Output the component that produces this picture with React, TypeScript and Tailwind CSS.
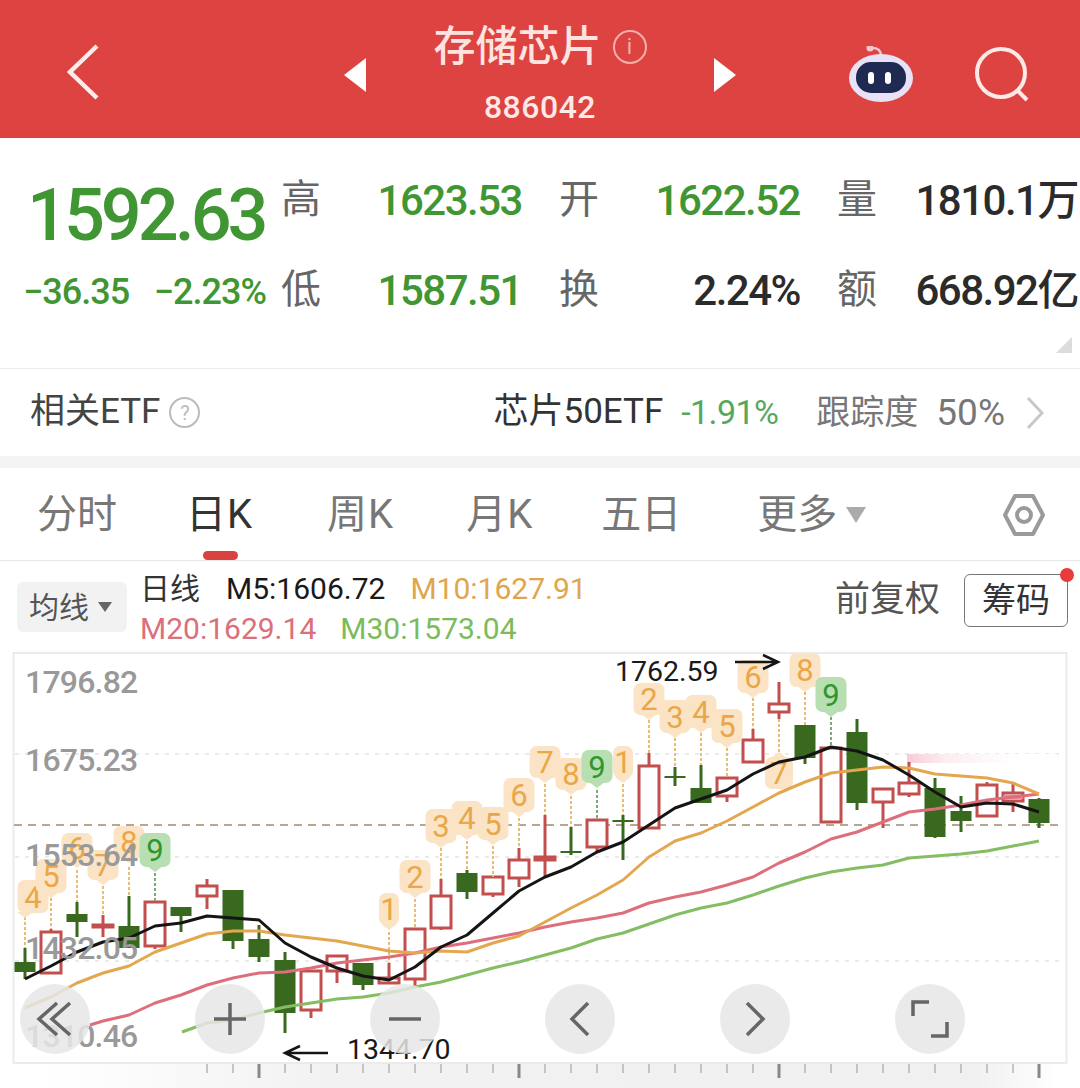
// [cx, wickTop, bodyTop, bodyBottom, wickBottom, up]
const candles: [number, number, number, number, number, boolean][] = [
  [25, 948, 962, 972, 979, false],
  [51, 929, 932, 973, 973, true],
  [77, 902, 914, 922, 937, false],
  [103, 915, 925, 927, 937, true],
  [129, 896, 926, 948, 948, false],
  [155, 902, 902, 946, 949, true],
  [181, 907, 907, 916, 932, false],
  [207, 879, 886, 896, 909, true],
  [233, 890, 890, 941, 949, false],
  [259, 925, 939, 957, 962, false],
  [285, 952, 960, 1013, 1033, false],
  [311, 971, 971, 1010, 1018, true],
  [337, 956, 956, 971, 983, true],
  [363, 963, 963, 985, 990, false],
  [389, 963, 978, 983, 983, true],
  [415, 929, 929, 979, 987, true],
  [441, 879, 896, 928, 930, true],
  [467, 870, 873, 892, 899, false],
  [493, 877, 877, 894, 897, true],
  [519, 848, 860, 878, 887, true],
  [545, 815, 857, 860, 877, true],
  [571, 827, 851, 853, 855, false],
  [597, 820, 820, 847, 852, true],
  [623, 815, 820, 822, 860, false],
  [649, 753, 766, 828, 828, true],
  [675, 767, 776, 778, 786, false],
  [701, 765, 788, 803, 803, false],
  [727, 778, 778, 796, 802, true],
  [753, 729, 740, 762, 762, true],
  [779, 682, 704, 712, 719, true],
  [805, 725, 725, 758, 764, false],
  [831, 748, 748, 822, 822, true],
  [857, 719, 732, 803, 810, false],
  [883, 789, 789, 802, 828, true],
  [909, 762, 783, 794, 797, true],
  [935, 778, 788, 837, 838, false],
  [961, 796, 811, 821, 832, false],
  [987, 782, 785, 816, 816, true],
  [1013, 782, 793, 801, 812, true],
  [1039, 798, 799, 823, 828, false],
];

const m5 = '25,979 51,966 77,952 103,942 129,938 155,926 181,923 207,916 233,918 259,920 285,943 311,957 337,968 363,976 389,980 415,967 441,947 467,935 493,913 519,891 545,877 571,867 597,852 623,842 649,825 675,808 701,799 727,790 753,774 779,762 805,757 831,747 857,751 883,760 909,775 935,792 961,807 987,803 1013,804 1039,812';
const m10 = '25,1008 51,997 77,983 103,973 129,966 155,952 181,943 207,934 233,931 259,931 285,935 311,938 337,941 363,946 389,951 415,953 441,951 467,952 493,943 519,936 545,922 571,908 597,895 623,880 649,857 675,841 701,833 727,821 753,807 779,793 805,782 831,773 857,770 883,767 909,768 935,774 961,776 987,778 1013,783 1039,794';
const m20 = '90,1025 103,1021 129,1015 155,1003 181,995 207,985 233,978 259,973 285,972 311,968 337,963 363,960 389,957 415,953 441,947 467,943 493,938 519,933 545,927 571,922 597,918 623,913 649,903 675,897 701,892 727,885 753,877 779,863 805,852 831,839 857,832 883,822 909,812 935,809 961,805 987,800 1013,797 1039,794';
const m30 = '182,1032 207,1023 233,1020 259,1013 285,1007 311,1003 337,999 363,997 389,993 415,987 441,982 467,975 493,968 519,962 545,955 571,948 597,939 623,933 649,924 675,915 701,908 727,903 753,895 779,886 805,878 831,872 857,868 883,865 909,858 935,856 961,854 987,851 1013,846 1039,841';

// [tipX, tagX, top, bottom, lineFrom, lineTo, label]
const tags: [number, number, number, number, number, number, string][] = [
  [25, 33, 880, 913, 917, 948, '4'],
  [51, 51, 859, 893, 898, 929, '5'],
  [77, 77, 833, 863, 870, 902, '6'],
  [103, 103, 850, 880, 886, 915, '7'],
  [129, 129, 826, 858, 867, 896, '8'],
  [155, 155, 833, 867, 873, 902, '9'],
  [389, 389, 893, 925, 932, 963, '1'],
  [415, 415, 860, 893, 899, 929, '2'],
  [441, 441, 809, 843, 848, 879, '3'],
  [467, 467, 801, 835, 841, 870, '4'],
  [493, 493, 807, 840, 846, 877, '5'],
  [519, 519, 778, 812, 818, 848, '6'],
  [545, 545, 746, 778, 784, 815, '7'],
  [571, 571, 758, 790, 796, 827, '8'],
  [597, 597, 750, 783, 790, 820, '9'],
  [623, 623, 746, 778, 784, 815, '1'],
  [649, 649, 683, 715, 720, 753, '2'],
  [675, 675, 700, 733, 738, 767, '3'],
  [701, 701, 695, 728, 733, 765, '4'],
  [727, 727, 709, 743, 748, 778, '5'],
  [753, 753, 660, 693, 698, 729, '6'],
  [805, 805, 653, 687, 692, 725, '8'],
  [831, 831, 677, 712, 717, 748, '9'],
];

const axisLabels: [number, string][] = [
  [693, '1796.82'],
  [771, '1675.23'],
  [866, '1553.64'],
  [959, '1432.05'],
  [1047, '1310.46'],
];

const ticks = Array.from({ length: 33 }, (_, i) => 207 + i * 26);

function Candle({ c }: { c: (typeof candles)[number] }) {
  const [cx, wickTop, bodyTop, bodyBottom, wickBottom, up] = c;
  const color = up ? '#c24f4d' : '#38691f';
  return (
    <g>
      <line x1={cx} x2={cx} y1={wickTop} y2={wickBottom} stroke={color} strokeWidth={3} />
      {up ? (
        <rect x={cx - 10} y={bodyTop} width={20} height={bodyBottom - bodyTop} fill="#fff" stroke={color} strokeWidth={3} />
      ) : (
        <rect x={cx - 10.5} y={bodyTop} width={21} height={bodyBottom - bodyTop} fill={color} />
      )}
    </g>
  );
}

function Tag({ t }: { t: (typeof tags)[number] }) {
  const [tipX, tagX, top, bottom, from, to, label] = t;
  const green = label === '9';
  const narrow = label === '1';
  const w = narrow ? 20 : 31;
  const bg = green ? '#b7dfb1' : '#fbe3c6';
  return (
    <g>
      <line x1={tipX} x2={tipX} y1={from} y2={to} stroke={green ? '#7fa67c' : '#e8bb76'} strokeWidth={2} strokeDasharray="3 2" />
      <rect x={tagX - w / 2} y={top} width={w} height={bottom - top} rx={7} fill={bg} />
      <path d={`M${tipX - 8} ${bottom - 1}L${tipX} ${bottom + 5}L${tipX + 8} ${bottom - 1}Z`} fill={bg} />
      <text x={tagX} y={(top + bottom) / 2 + 11} textAnchor="middle" className={`text-[31px] ${green ? 'fill-[#2f962f]' : 'fill-[#e9a748]'}`}>
        {label}
      </text>
    </g>
  );
}

function KChart() {
  return (
    <svg viewBox="0 650 1080 438" className="block w-[1080px] h-[438px]">
      <defs>
        <linearGradient id="strip" x1="0" x2="1" y1="0" y2="0">
          <stop offset="0.04" stopColor="#fff" />
          <stop offset="0.3" stopColor="#f2f2f2" />
          <stop offset="0.9" stopColor="#f0f0f0" />
          <stop offset="0.98" stopColor="#fff" />
        </linearGradient>
        <linearGradient id="fade" x1="0" x2="1" y1="0" y2="0">
          <stop offset="0" stopColor="#f6cdd6" />
          <stop offset="0.25" stopColor="#fcedf0" />
          <stop offset="0.7" stopColor="#fff" />
        </linearGradient>
      </defs>
      <rect x="0" y="1064" width="1080" height="24" fill="url(#strip)" />
      <rect x="13.5" y="653" width="1053" height="410" fill="#fff" stroke="#ebebeb" strokeWidth={2} />
      {[754, 857, 961].map((y) => (
        <line key={y} x1={15} x2={1065} y1={y} y2={y} stroke="#e4e4e4" strokeWidth={1.5} strokeDasharray="4 6" />
      ))}
      <line x1={14} x2={1064} y1={825} y2={825} stroke="#b8a68f" strokeWidth={2} strokeDasharray="8 6" />
      <rect x={907} y={754} width={150} height={9} fill="url(#fade)" />
      {candles.map((c) => (
        <Candle key={c[0]} c={c} />
      ))}
      <rect x={1003} y={795} width={20} height={4} fill="#f08a96" />
      {tags.map((t) => (
        <Tag key={`${t[0]}-${t[6]}`} t={t} />
      ))}
      {/* the 7 of the run hangs below its candle */}
      <g>
        <line x1={779} x2={779} y1={719} y2={752} stroke="#e8bb76" strokeWidth={2} strokeDasharray="3 2" />
        <path d="M771 758L779 752L787 758Z" fill="#fbe3c6" />
        <rect x={765} y={757} width={28} height={32} rx={7} fill="#fbe3c6" />
        <text x={779} y={784} textAnchor="middle" className="text-[31px] fill-[#e9a748]">7</text>
      </g>
      <polyline points={m30} fill="none" stroke="#84bd62" strokeWidth={3} strokeLinejoin="round" />
      <polyline points={m20} fill="none" stroke="#dd6f7c" strokeWidth={3} strokeLinejoin="round" />
      <polyline points={m10} fill="none" stroke="#e3a84f" strokeWidth={3} strokeLinejoin="round" />
      <polyline points={m5} fill="none" stroke="#151515" strokeWidth={3} strokeLinejoin="round" />
      {axisLabels.map(([y, label]) => (
        <text key={label} x={25} y={y} className="text-[32px] font-medium tracking-[-0.8px] fill-[#999999]">
          {label}
        </text>
      ))}
      <text x={615} y={681} className="text-[28.5px] fill-[#1a1a1a]">1762.59</text>
      <path d="M735 662H777M763 655L778 662L763 669" fill="none" stroke="#151515" strokeWidth={2.5} />
      <path d="M328 1053H286M300 1046L285 1053L300 1060" fill="none" stroke="#151515" strokeWidth={2.5} />
      <text x={347} y={1059} className="text-[28.5px] fill-[#1a1a1a]">1344.70</text>
      {ticks.map((x) => {
        const big = (x - 259) % 260 === 0;
        return (
          <line
            key={x}
            x1={x}
            x2={x}
            y1={1064}
            y2={big ? 1078 : 1073}
            stroke={big ? '#888888' : '#b4b4b4'}
            strokeWidth={big ? 3 : 1.5}
          />
        );
      })}
    </svg>
  );
}

function ChartButton({ children }: { children: React.ReactNode }) {
  return (
    <div className="flex h-[70px] w-[70px] items-center justify-center rounded-full bg-[#e6e6e6]/85 text-[#666666]">
      {children}
    </div>
  );
}

function Stat({ label, value, green }: { label: string; value: string; green?: boolean }) {
  return (
    <div className="flex items-center justify-between h-[90px]">
      <span className="text-[40px] text-[#666666]">{label}</span>
      <span className={`text-[42px] font-medium tracking-[-1.5px] ${green ? 'text-[#3f9632]' : 'text-[#2b2b2b]'}`}>
        {value}
      </span>
    </div>
  );
}

export default function App() {
  return (
    <div className="w-[1080px] h-[1088px] overflow-hidden bg-white font-[Roboto,'Noto_Sans_CJK_SC',sans-serif]">
      {/* header */}
      <header className="grid h-[138px] grid-cols-[1fr_392px_1fr] bg-[#dd4340] text-white">
        <div className="flex items-center pl-[66px]">
          <svg width="34" height="58" viewBox="0 0 34 58" fill="none" stroke="#fdeeee" strokeWidth={4.5} className="mt-[6px]">
            <path d="M31 3L4 29L31 55" />
          </svg>
        </div>
        <div className="flex items-center justify-between">
          <span className="mt-[11px] h-0 w-0 border-y-[17px] border-r-[22px] border-y-transparent border-r-white" />
          <div className="flex flex-col items-center self-start">
            <div className="flex h-[94px] items-center gap-[11px] pb-[1px]">
              <span className="text-[42px] font-medium text-[#fde4e0] leading-none">存储芯片</span>
              <span className="flex h-[34px] w-[34px] items-center justify-center rounded-full border-2 border-[#f4b0aa] text-[22px] leading-none text-[#f4b0aa]">
                i
              </span>
            </div>
            <span className="-mt-[3px] text-[32px] leading-none font-medium tracking-[0.5px] text-[#fde9e6]">886042</span>
          </div>
          <span className="mt-[11px] h-0 w-0 border-y-[17px] border-l-[22px] border-y-transparent border-l-white" />
        </div>
        <div className="flex items-center justify-end gap-[60px] pr-[50px] pt-[14px]">
          <svg width="66" height="60" viewBox="0 0 66 60">
            <path d="M24 2C30 2 33 4 33 10" fill="none" stroke="#f6c7cf" strokeWidth={2.5} />
            <circle cx="22" cy="2" r="3.5" fill="#f6c7cf" />
            <ellipse cx="33" cy="32" rx="32" ry="24" fill="#e7e2f6" />
            <rect x="8" y="16" width="50" height="31" rx="15" fill="#1f2a52" />
            <rect x="20" y="26" width="6" height="12" rx="3" fill="#fff" />
            <rect x="37" y="26" width="6" height="12" rx="3" fill="#fff" />
          </svg>
          <svg width="56" height="58" viewBox="0 0 56 58" fill="none" stroke="#fde9e6" strokeWidth={4}>
            <circle cx="27" cy="26" r="24" />
            <path d="M44 44L53 53" />
          </svg>
        </div>
      </header>

      {/* quote */}
      <section className="relative flex h-[230px] pt-[17px]">
        <div className="w-[281px] shrink-0 pl-[27px]">
          <div className="flex h-[97px] items-end text-[72px] leading-none font-medium tracking-[-4px] text-[#3f9632]">1592.63</div>
          <div className="mt-[22px] -ml-[4px] flex justify-between pr-[15px] text-[36px] leading-none font-medium tracking-[-1px] text-[#3f9632]">
            <span>−36.35</span>
            <span>−2.23%</span>
          </div>
        </div>
        <div className="grid w-[797px] grid-cols-[241px_241px_241px] gap-x-[37px] content-start">
          <Stat label="高" value="1623.53" green />
          <Stat label="开" value="1622.52" green />
          <Stat label="量" value="1810.1万" />
          <Stat label="低" value="1587.51" green />
          <Stat label="换" value="2.24%" />
          <Stat label="额" value="668.92亿" />
        </div>
        <span className="absolute right-[8px] bottom-[15px] h-0 w-0 border-b-[16px] border-l-[16px] border-b-[#dcdcdc] border-l-transparent" />
      </section>

      {/* etf row */}
      <section className="flex h-[88px] items-center justify-between border-t border-[#ececec] pl-[30px] pr-[36px]">
        <div className="flex items-center gap-[9px] text-[35px] text-[#444444]">
          <span>相关ETF</span>
          <span className="flex h-[31px] w-[31px] items-center justify-center rounded-full border-2 border-[#bbbbbb] text-[20px] leading-none text-[#bbbbbb]">?</span>
        </div>
        <div className="flex items-center text-[34px]">
          <span className="text-[35px] text-[#333333]">芯片50ETF</span>
          <span className="ml-[18px] tracking-[-0.6px] text-[#55a860]">-1.91%</span>
          <span className="ml-[38px] text-[#777777]">跟踪度</span>
          <span className="ml-[18px] text-[37px] text-[#777777]">50%</span>
          <svg width="18" height="34" viewBox="0 0 18 34" fill="none" stroke="#c8c8c8" strokeWidth={3} className="ml-[21px]">
            <path d="M2 2L16 17L2 32" />
          </svg>
        </div>
      </section>

      <div className="h-[12px] bg-[#f4f4f4]" />

      {/* period tabs */}
      <nav className="relative flex h-[93px] items-center border-b border-[#e8e8e8] pl-[37px] text-[40px] text-[#777777]">
        <div className="flex items-center pt-[2px]">
          <span>分时</span>
          <span className="ml-[69px] tracking-[1px] text-[#333333]">日K</span>
          <span className="ml-[74px] tracking-[1px]">周K</span>
          <span className="ml-[72px] tracking-[1px]">月K</span>
          <span className="ml-[68px]">五日</span>
          <span className="ml-[76px] flex items-center gap-[9px]">
            更多
            <span className="h-0 w-0 border-x-[10px] border-t-[16px] border-x-transparent border-t-[#aaaaaa]" />
          </span>
        </div>
        <span className="absolute bottom-0 left-[203px] h-[9px] w-[35px] rounded-full bg-[#d8423f]" />
        <svg className="absolute left-[1003px] top-[25px]" width="42" height="44" viewBox="0 0 42 44" fill="none" stroke="#9a9a9a" strokeWidth={4}>
          <path d="M12 3H30L40 22L30 41H12L2 22Z" strokeLinejoin="round" />
          <circle cx="21" cy="22" r="7" />
        </svg>
      </nav>

      {/* legend bar */}
      <section className="flex h-[89px] items-start justify-between pl-[17px] pr-[12px] text-[30px]">
        <div className="flex items-start gap-[13px]">
          <div className="mt-[21px] flex h-[50px] w-[110px] items-center justify-center gap-[9px] rounded-[6px] bg-[#f2f2f2] pr-[3px] text-[#555555]">
            均线
            <span className="h-0 w-0 border-x-[7px] border-t-[10px] border-x-transparent border-t-[#666666]" />
          </div>
          <div className="pt-[8px] leading-[40px]">
            <div className="flex">
              <span className="text-[#333333]">日线</span>
              <span className="ml-[26px] text-[#1a1a1a]">M5:1606.72</span>
              <span className="ml-[25px] text-[#dfa64d]">M10:1627.91</span>
            </div>
            <div className="flex">
              <span className="text-[#d9707b]">M20:1629.14</span>
              <span className="ml-[24px] text-[#7cbb5c]">M30:1573.04</span>
            </div>
          </div>
        </div>
        <div className="flex items-center gap-[24px] pt-[13px]">
          <span className="text-[35px] text-[#555555]">前复权</span>
          <span className="relative flex h-[53px] w-[104px] items-center justify-center rounded-[6px] border border-[#777777] text-[34px] text-[#333333]">
            筹码
            <span className="absolute -top-[7px] -right-[7px] h-[14px] w-[14px] rounded-full bg-[#ea3b3b]" />
          </span>
        </div>
      </section>

      {/* chart */}
      <section className="relative">
        <KChart />
        <div className="absolute left-[20px] top-[334px] flex gap-[105px]">
          <ChartButton>
            <svg width="38" height="38" viewBox="0 0 38 38" fill="none" stroke="currentColor" strokeWidth={3.5}>
              <path d="M21 3L3 19L21 35M34 3L16 19L34 35" />
            </svg>
          </ChartButton>
          <ChartButton>
            <svg width="34" height="34" viewBox="0 0 34 34" fill="none" stroke="currentColor" strokeWidth={3.5}>
              <path d="M17 1V33M1 17H33" />
            </svg>
          </ChartButton>
          <ChartButton>
            <svg width="34" height="6" viewBox="0 0 34 6" fill="none" stroke="currentColor" strokeWidth={3.5}>
              <path d="M1 3H33" />
            </svg>
          </ChartButton>
          <ChartButton>
            <svg width="22" height="36" viewBox="0 0 22 36" fill="none" stroke="currentColor" strokeWidth={3.5}>
              <path d="M19 2L3 18L19 34" />
            </svg>
          </ChartButton>
          <ChartButton>
            <svg width="22" height="36" viewBox="0 0 22 36" fill="none" stroke="currentColor" strokeWidth={3.5}>
              <path d="M3 2L19 18L3 34" />
            </svg>
          </ChartButton>
          <ChartButton>
            <svg width="38" height="38" viewBox="0 0 38 38" fill="none" stroke="currentColor" strokeWidth={3.5}>
              <path d="M2 16V2H18M36 22V36H20" />
            </svg>
          </ChartButton>
        </div>
      </section>
    </div>
  );
}
